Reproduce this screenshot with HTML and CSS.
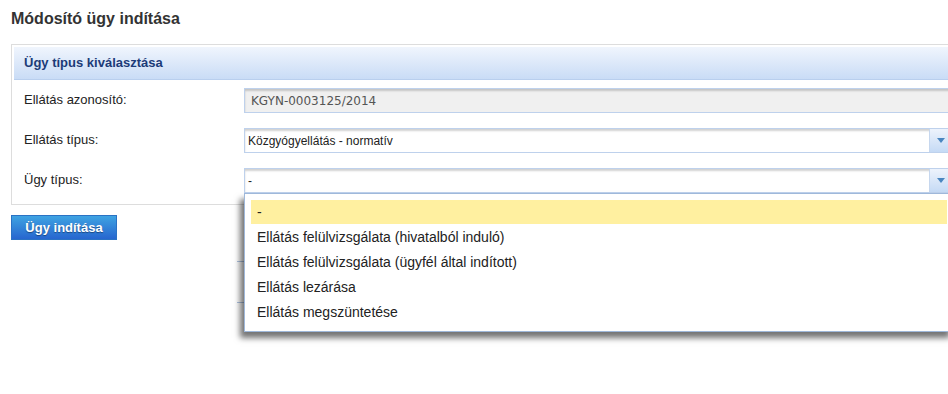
FILE: index.html
```html
<!DOCTYPE html>
<html lang="hu">
<head>
  <meta charset="UTF-8">
  <title>Módosító ügy indítása</title>
  <link rel="stylesheet" href="styles.css">
</head>
<body>
  <h1 class="page-title">Módosító ügy indítása</h1>

  <div class="panel">
    <div class="panel-head">Ügy típus kiválasztása</div>
    <div class="form-grid">
      <label class="form-label">Ellátás azonosító:</label>
      <div class="field field-readonly">KGYN-0003125/2014</div>

      <label class="form-label">Ellátás típus:</label>
      <div class="field field-select">
        <span class="select-value">Közgyógyellátás - normatív</span>
        <span class="select-btn">
          <svg width="8" height="5" viewBox="0 0 8 5"><path d="M0 0h8L4 5z" fill="#4a86c0"/></svg>
        </span>
      </div>

      <label class="form-label">Ügy típus:</label>
      <div class="field field-select open">
        <span class="select-value">-</span>
        <span class="select-btn">
          <svg width="8" height="5" viewBox="0 0 8 5"><path d="M0 0h8L4 5z" fill="#4a86c0"/></svg>
        </span>
        <ul class="select-list">
          <li class="selected">-</li>
          <li>Ellátás felülvizsgálata (hivatalból induló)</li>
          <li>Ellátás felülvizsgálata (ügyfél által indított)</li>
          <li>Ellátás lezárása</li>
          <li>Ellátás megszüntetése</li>
        </ul>
      </div>
    </div>
  </div>

  <button class="btn-primary">Ügy indítása</button>

  <div class="behind-box"></div>
</body>
</html>
```

FILE: styles.css
```css
html {
  height: 100%;
}
body {
  overflow: hidden;
  box-sizing: border-box;
  min-height: 100%;
  margin: 0;
  padding: 9px 0 0 11px;
  font-family: "Liberation Sans", Arial, sans-serif;
  font-size: 13px;
  color: #222;
  background: #fff;
}
.page-title {
  margin: 0;
  font-size: 16px;
  line-height: 20px;
  color: #333;
}
.panel {
  margin-top: 15px;
  width: 960px;
  padding: 2px;
  border: 1px solid #ddd;
}
.panel-head {
  height: 32px;
  line-height: 31px;
  padding-left: 10px;
  font-weight: bold;
  font-size: 13px;
  color: #1c3b78;
  background: linear-gradient(#f0f5fd, #c9dcf6);
  border-bottom: 1px solid #b9cfee;
}
.form-grid {
  display: grid;
  grid-template-columns: 220px 710px;
  grid-auto-rows: 25px;
  row-gap: 15px;
  padding: 8px 10px 9px 10px;
  align-items: center;
}
.form-label {
  font-size: 13px;
  color: #222;
  margin-top: -2px;
}
.field {
  height: 25px;
  box-sizing: border-box;
  border: 1px solid #bed1ec;
  box-shadow: inset 0 2px 2px rgba(0, 0, 0, 0.18);
  display: flex;
  align-items: center;
}
.field-readonly {
  background: #f0f0f0;
  padding-left: 6px;
  font-family: "DejaVu Sans", Verdana, sans-serif;
  font-size: 12px;
  color: #555;
}
.field-select {
  position: relative;
  background: #fff;
}
.select-value {
  flex: 1;
  padding-left: 3px;
  font-size: 12px;
  color: #222;
}
.select-btn {
  width: 24px;
  height: 23px;
  border-left: 1px solid #c6d7ee;
  background: linear-gradient(#edf3fc, #c5daf5);
  display: flex;
  align-items: center;
  justify-content: center;
  padding-right: 2px;
  box-sizing: border-box;
}
.select-list {
  display: none;
  position: absolute;
  z-index: 2;
  top: calc(100% + 1px);
  left: -1px;
  width: 710px;
  box-sizing: border-box;
  margin: 0;
  padding: 6px;
  list-style: none;
  background: #fff;
  border: 1px solid #9fb8da;
  box-shadow: -4px 6px 6px rgba(0, 0, 0, 0.55);
}
.open .select-list {
  display: block;
}
.select-list li {
  height: 25px;
  line-height: 25px;
  padding-left: 6px;
  font-size: 14px;
  color: #222;
}
.select-list li.selected {
  height: 24px;
  line-height: 24px;
  margin-bottom: 1px;
  background: #fff0a0;
}
.btn-primary {
  display: block;
  margin-top: 10px;
  width: 106px;
  height: 25px;
  padding: 0;
  border: 1px solid #2a72c4;
  background: linear-gradient(#3ea3e2, #2766cf);
  color: #fff;
  font-family: "Liberation Sans", Arial, sans-serif;
  font-weight: bold;
  font-size: 13px;
  text-shadow: 0 1px 1px rgba(0, 0, 0, 0.4);
  cursor: pointer;
}
.behind-box {
  margin: 21px 0 0 226px;
  width: 700px;
  height: 40px;
  border-top: 1px solid #b0c5e2;
  border-bottom: 1px solid #b0c5e2;
}
```
